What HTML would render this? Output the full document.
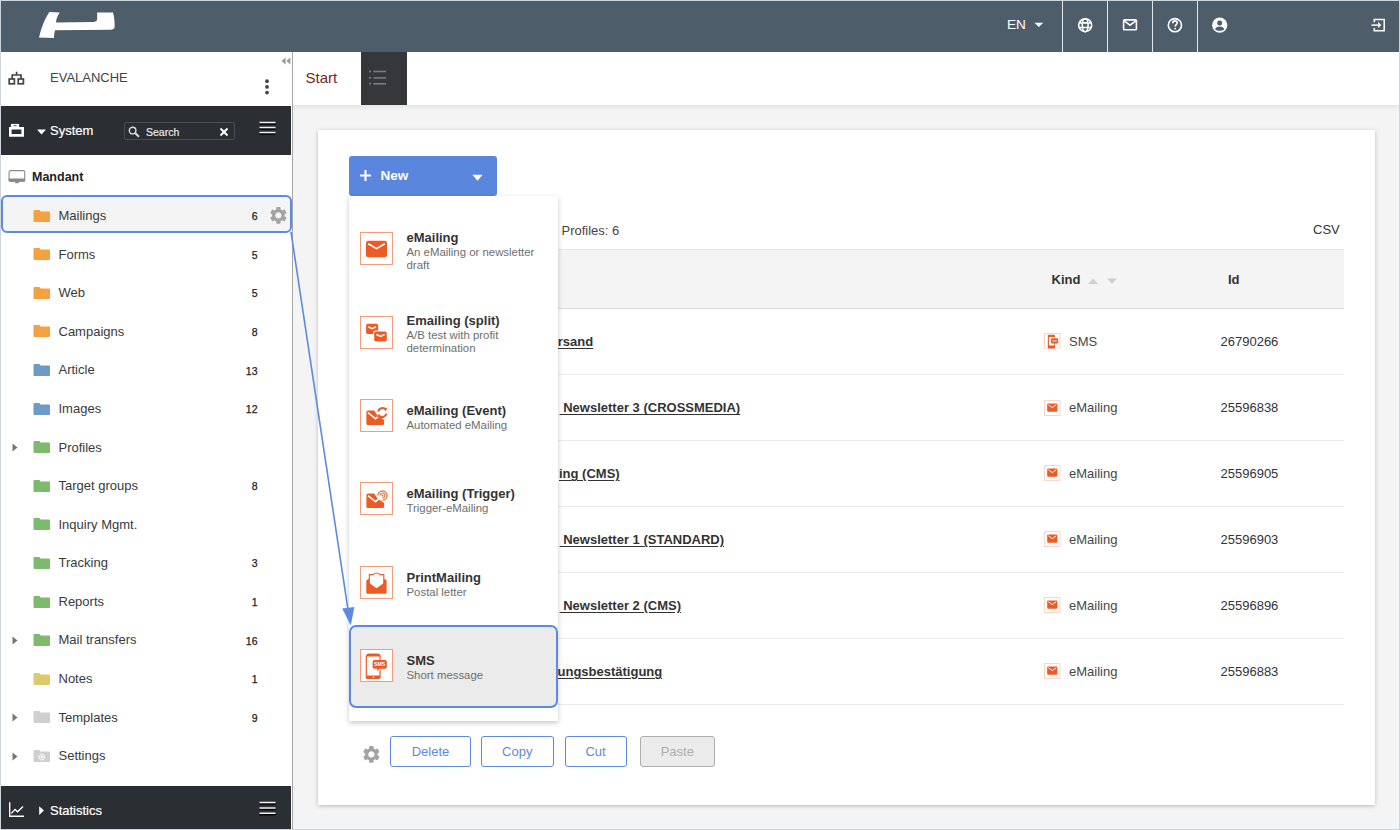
<!DOCTYPE html>
<html><head><meta charset="utf-8">
<style>
*{box-sizing:border-box;margin:0;padding:0}
html,body{width:1400px;height:830px;overflow:hidden;background:#fff;font-family:"Liberation Sans",sans-serif;color:#333}
#frame{position:absolute;left:0;top:0;width:1400px;height:830px;border:1px solid #cdd5dc;z-index:50;pointer-events:none}
.a{position:absolute}
#hdr{left:0;top:0;width:1400px;height:52px;background:#4d5d69}
.hsep{top:0;width:1px;height:52px;background:#e6e9ec}
#side{left:1px;top:52px;width:291px;height:777px;background:#fff}
#sideline{left:292px;top:52px;width:1px;height:777px;background:#a5a5a5}
#sysbar{left:1px;top:105.6px;width:290px;height:49.4px;background:#2b2e33}
#statbar{left:1px;top:786px;width:290px;height:43px;background:#2b2e33}
#tabs{left:293px;top:52px;width:1106px;height:53px;background:#fff}
#content{left:293px;top:105px;width:1106px;height:724px;background:#f4f4f4}
#panel{left:318px;top:130px;width:1057px;height:675px;background:#fff;box-shadow:0 1px 4px rgba(0,0,0,.25)}
.t13{font-size:13px;line-height:15px}
.lnk{font-weight:bold;text-decoration:underline;text-underline-offset:2px;white-space:nowrap;color:#333}
</style></head><body>
<div id="frame"></div>
<div id="hdr" class="a">
<svg class="a" style="left:0;top:0" width="130" height="52" viewBox="0 0 130 52">
<path fill="#fff" d="M49.3 12.1 L59.8 12.6 C57.6 15.5 56.3 18.8 56 22.5 L93.8 21.9 C96.3 21.6 97.3 20.5 97.2 18.6 L97.1 12.5 L113 12.5 C114.4 17.5 114.8 22.5 114.6 27.3 C114.4 29 113 29.6 110.7 29.7 L55.2 30.2 C54.3 32.5 54 35 54 37.9 L39 37.6 C41 28.5 44.5 19.5 49.3 12.1 Z"/>
</svg>
<div class="a" style="left:1007px;top:16.5px;font-size:13.6px;line-height:16px;color:#fff">EN</div>
<svg class="a" style="left:1034px;top:21px" width="11" height="7" viewBox="0 0 11 7"><path fill="#fff" d="M0.5 1.8 L9.2 1.8 L4.85 5.9 Z"/></svg>
<div class="a hsep" style="left:1062px;top:0"></div>
<div class="a hsep" style="left:1107px;top:0"></div>
<div class="a hsep" style="left:1152px;top:0"></div>
<div class="a hsep" style="left:1197px;top:0"></div>
<svg class="a" style="left:1076px;top:16px" width="18" height="18" viewBox="0 0 18 18"><g fill="none" stroke="#fff" stroke-width="1.6"><circle cx="9.2" cy="9.2" r="6.5"/><ellipse cx="9.2" cy="9.2" rx="2.9" ry="6.5"/><path d="M3 6.9H15.4M3 11.5H15.4"/></g></svg>
<svg class="a" style="left:1121px;top:17px" width="18" height="16" viewBox="0 0 18 16"><g fill="none" stroke="#fff" stroke-width="1.6"><rect x="2.6" y="2.9" width="12.8" height="9.9" rx="0.8"/><path d="M2.9 3.6 L9 8.2 L15.1 3.6"/></g></svg>
<svg class="a" style="left:1166px;top:16px" width="18" height="18" viewBox="0 0 18 18"><g fill="none" stroke="#fff" stroke-width="1.6"><circle cx="8.9" cy="9.2" r="6.6"/><path d="M6.7 7.3 C6.7 5.7 7.8 4.9 9 4.9 C10.3 4.9 11.2 5.7 11.2 7 C11.2 8.5 9.1 8.7 9.1 10.4"/></g><circle cx="9.1" cy="12.6" r="0.95" fill="#fff"/></svg>
<svg class="a" style="left:1211px;top:16px" width="18" height="18" viewBox="0 0 18 18"><circle cx="8.7" cy="9.2" r="7.6" fill="#fff"/><circle cx="8.7" cy="6.9" r="2.5" fill="#4d5d69"/><path fill="#4d5d69" d="M4 13.2 C5.1 11.1 6.9 10.5 8.7 10.5 C10.5 10.5 12.3 11.1 13.4 13.2 C12.2 14.2 10.5 14.8 8.7 14.8 C6.9 14.8 5.2 14.2 4 13.2Z"/></svg>
<svg class="a" style="left:1369.5px;top:17px" width="18" height="18" viewBox="0 0 18 18"><g fill="none" stroke="#fff" stroke-width="1.5"><path d="M4.3 5.2 V2.4 H14.2 V13.8 H4.3 V11"/><path d="M1.5 8.1 H9.5"/></g><path fill="#fff" d="M8 4.9 L11.3 8.1 L8 11.3Z"/></svg>
</div>
<div id="side" class="a"></div>
<div id="sideline" class="a"></div>
<div id="sysbar" class="a"></div>
<div id="statbar" class="a"></div>
<div id="tabs" class="a"></div>
<svg class="a" style="left:7px;top:71px" width="20" height="16" viewBox="0 0 20 16"><g fill="none" stroke="#444" stroke-width="1.7"><path d="M9.6 0.8 V4 M5.2 7.8 V4 H14 V7.8"/><rect x="2.2" y="8" width="5.2" height="4.8"/><rect x="11.2" y="8" width="5.2" height="4.8"/></g></svg>
<div class="a t13" style="left:50px;top:70px;color:#444">EVALANCHE</div>
<svg class="a" style="left:281px;top:57px" width="10" height="8" viewBox="0 0 10 8"><path fill="#999" d="M4.6 0.5 V7.5 L0.5 4Z M9.4 0.5 V7.5 L5.3 4Z"/></svg>
<svg class="a" style="left:263.7px;top:78px" width="6" height="18" viewBox="0 0 6 18"><g fill="#444"><circle cx="3" cy="3.2" r="1.9"/><circle cx="3" cy="8.9" r="1.9"/><circle cx="3" cy="14.6" r="1.9"/></g></svg>
<svg class="a" style="left:8px;top:122px" width="18" height="16" viewBox="0 0 18 16"><path fill="#fff" fill-rule="evenodd" d="M1 5.1 H16 V14.8 H1Z M3.6 7.5 V12.1 H13.4 V7.5Z"/><path fill="#fff" d="M2.9 1.9 H11.1 V5.3 H2.9Z"/><rect x="5.6" y="3.4" width="3" height="0.8" fill="#2b2e33"/></svg>
<svg class="a" style="left:36px;top:128px" width="11" height="8" viewBox="0 0 11 8"><path fill="#fff" d="M1 1.6 H10 L5.5 6.5Z"/></svg>
<div class="a t13" style="left:50px;top:123px;color:#fff;-webkit-text-stroke:0.2px #fff">System</div>
<div class="a" style="left:124px;top:122px;width:111px;height:18px;border:1px solid #4b4e54;border-radius:2px"></div>
<svg class="a" style="left:128px;top:126px" width="13" height="12" viewBox="0 0 13 12"><g fill="none" stroke="#ddd" stroke-width="1.4"><circle cx="4.6" cy="4.6" r="3.3"/><path d="M7 7 L11 10.8" stroke-width="2"/></g></svg>
<div class="a" style="left:146px;top:126px;font-size:10.5px;line-height:13px;color:#e8e8e8;-webkit-text-stroke:0.2px #e8e8e8">Search</div>
<svg class="a" style="left:219px;top:127px" width="10" height="10" viewBox="0 0 10 10"><path stroke="#fff" stroke-width="2" d="M1.5 1.5 L8.5 8.5 M8.5 1.5 L1.5 8.5"/></svg>
<svg class="a" style="left:258px;top:120px" width="19" height="16" viewBox="0 0 19 16"><g stroke="#000" stroke-width="1.5"><path d="M1.5 4 H17.5 M1.5 9 H17.5 M1.5 14 H17.5"/></g><g stroke="#f0f0f0" stroke-width="1.5"><path d="M1.5 2.6 H17.5 M1.5 7.6 H17.5 M1.5 12.6 H17.5"/></g></svg>
<svg class="a" style="left:7px;top:168px" width="20" height="17" viewBox="0 0 20 17"><rect x="2.1" y="2.6" width="15.6" height="10.6" rx="1.3" fill="#fff" stroke="#8a8a8a" stroke-width="1.1"/><path d="M1.6 10.6 H18.2 V12.3 Q18.2 13.7 16.8 13.7 H3 Q1.6 13.7 1.6 12.3Z" fill="#8a8a8a"/><rect x="8.2" y="13.7" width="3.6" height="1.5" fill="#8a8a8a"/></svg>
<div class="a" style="left:32px;top:170px;font-size:12.5px;line-height:15px;font-weight:bold;color:#222">Mandant</div>
<div class="a" style="left:1px;top:195.3px;width:291px;height:37.5px;border:2px solid #5b8ae0;border-radius:6px;background:#f4f4f4"></div>

<svg class="a" style="left:267.9px;top:205.1px" width="20.75" height="20.75" viewBox="0 0 24 24"><path fill="#a3a3a3" d="M19.14 12.94c.04-.3.06-.61.06-.94 0-.32-.02-.64-.07-.94l2.03-1.58c.18-.14.23-.41.12-.61l-1.92-3.32c-.12-.22-.37-.29-.59-.22l-2.39.96c-.5-.38-1.03-.7-1.62-.94L14.4 2.81c-.04-.24-.24-.41-.48-.41h-3.84c-.24 0-.43.17-.47.41L9.25 5.35c-.59.24-1.13.57-1.62.94L5.24 5.33c-.22-.08-.47 0-.59.22L2.74 8.87c-.12.21-.08.47.12.61l2.03 1.58c-.05.3-.09.63-.09.94s.02.64.07.94l-2.03 1.58c-.18.14-.23.41-.12.61l1.92 3.32c.12.22.37.29.59.22l2.39-.96c.5.38 1.03.7 1.62.94l.36 2.54c.05.24.24.41.48.41h3.84c.24 0 .44-.17.47-.41l.36-2.54c.59-.24 1.13-.56 1.62-.94l2.39.96c.22.08.47 0 .59-.22l1.92-3.32c.12-.22.07-.47-.12-.61l-2.01-1.58zM12 15.6c-1.98 0-3.6-1.62-3.6-3.6s1.62-3.6 3.6-3.6 3.6 1.62 3.6 3.6-1.62 3.6-3.6 3.6z"/></svg>
<svg class="a" style="left:33px;top:210px" width="17" height="12" viewBox="0 0 17 12"><path fill="#f5a142" d="M0.5 1 Q0.5 0 1.5 0 H6.5 L7.5 1.5 H16 Q17 1.5 17 2.5 V11 Q17 12 16 12 H1.5 Q0.5 12 0.5 11Z"/></svg>
<div class="a t13" style="left:58.5px;top:208.2px;color:#3a3a3a">Mailings</div>
<div class="a" style="left:230px;width:27.5px;text-align:right;top:210.3px;font-size:10.5px;line-height:12px;font-weight:normal;color:#222;-webkit-text-stroke:0.25px #222">6</div>
<svg class="a" style="left:33px;top:248px" width="17" height="12" viewBox="0 0 17 12"><path fill="#f5a142" d="M0.5 1 Q0.5 0 1.5 0 H6.5 L7.5 1.5 H16 Q17 1.5 17 2.5 V11 Q17 12 16 12 H1.5 Q0.5 12 0.5 11Z"/></svg>
<div class="a t13" style="left:58.5px;top:246.8px;color:#3a3a3a">Forms</div>
<div class="a" style="left:230px;width:27.5px;text-align:right;top:248.9px;font-size:10.5px;line-height:12px;font-weight:normal;color:#222;-webkit-text-stroke:0.25px #222">5</div>
<svg class="a" style="left:33px;top:287px" width="17" height="12" viewBox="0 0 17 12"><path fill="#f5a142" d="M0.5 1 Q0.5 0 1.5 0 H6.5 L7.5 1.5 H16 Q17 1.5 17 2.5 V11 Q17 12 16 12 H1.5 Q0.5 12 0.5 11Z"/></svg>
<div class="a t13" style="left:58.5px;top:285.3px;color:#3a3a3a">Web</div>
<div class="a" style="left:230px;width:27.5px;text-align:right;top:287.4px;font-size:10.5px;line-height:12px;font-weight:normal;color:#222;-webkit-text-stroke:0.25px #222">5</div>
<svg class="a" style="left:33px;top:325px" width="17" height="12" viewBox="0 0 17 12"><path fill="#f5a142" d="M0.5 1 Q0.5 0 1.5 0 H6.5 L7.5 1.5 H16 Q17 1.5 17 2.5 V11 Q17 12 16 12 H1.5 Q0.5 12 0.5 11Z"/></svg>
<div class="a t13" style="left:58.5px;top:323.9px;color:#3a3a3a">Campaigns</div>
<div class="a" style="left:230px;width:27.5px;text-align:right;top:326.0px;font-size:10.5px;line-height:12px;font-weight:normal;color:#222;-webkit-text-stroke:0.25px #222">8</div>
<svg class="a" style="left:33px;top:364px" width="17" height="12" viewBox="0 0 17 12"><path fill="#6e9bc6" d="M0.5 1 Q0.5 0 1.5 0 H6.5 L7.5 1.5 H16 Q17 1.5 17 2.5 V11 Q17 12 16 12 H1.5 Q0.5 12 0.5 11Z"/></svg>
<div class="a t13" style="left:58.5px;top:362.4px;color:#3a3a3a">Article</div>
<div class="a" style="left:230px;width:27.5px;text-align:right;top:364.5px;font-size:10.5px;line-height:12px;font-weight:normal;color:#222;-webkit-text-stroke:0.25px #222">13</div>
<svg class="a" style="left:33px;top:403px" width="17" height="12" viewBox="0 0 17 12"><path fill="#6e9bc6" d="M0.5 1 Q0.5 0 1.5 0 H6.5 L7.5 1.5 H16 Q17 1.5 17 2.5 V11 Q17 12 16 12 H1.5 Q0.5 12 0.5 11Z"/></svg>
<div class="a t13" style="left:58.5px;top:401.0px;color:#3a3a3a">Images</div>
<div class="a" style="left:230px;width:27.5px;text-align:right;top:403.1px;font-size:10.5px;line-height:12px;font-weight:normal;color:#222;-webkit-text-stroke:0.25px #222">12</div>
<svg class="a" style="left:33px;top:441px" width="17" height="12" viewBox="0 0 17 12"><path fill="#7dba6e" d="M0.5 1 Q0.5 0 1.5 0 H6.5 L7.5 1.5 H16 Q17 1.5 17 2.5 V11 Q17 12 16 12 H1.5 Q0.5 12 0.5 11Z"/></svg>
<div class="a t13" style="left:58.5px;top:439.6px;color:#3a3a3a">Profiles</div>
<svg class="a" style="left:12px;top:443px" width="6" height="9" viewBox="0 0 6 9"><path fill="#777" d="M0.5 0.5 L5.5 4.5 L0.5 8.5Z"/></svg>
<svg class="a" style="left:33px;top:480px" width="17" height="12" viewBox="0 0 17 12"><path fill="#7dba6e" d="M0.5 1 Q0.5 0 1.5 0 H6.5 L7.5 1.5 H16 Q17 1.5 17 2.5 V11 Q17 12 16 12 H1.5 Q0.5 12 0.5 11Z"/></svg>
<div class="a t13" style="left:58.5px;top:478.1px;color:#3a3a3a">Target groups</div>
<div class="a" style="left:230px;width:27.5px;text-align:right;top:480.2px;font-size:10.5px;line-height:12px;font-weight:normal;color:#222;-webkit-text-stroke:0.25px #222">8</div>
<svg class="a" style="left:33px;top:518px" width="17" height="12" viewBox="0 0 17 12"><path fill="#7dba6e" d="M0.5 1 Q0.5 0 1.5 0 H6.5 L7.5 1.5 H16 Q17 1.5 17 2.5 V11 Q17 12 16 12 H1.5 Q0.5 12 0.5 11Z"/></svg>
<div class="a t13" style="left:58.5px;top:516.7px;color:#3a3a3a">Inquiry Mgmt.</div>
<svg class="a" style="left:33px;top:557px" width="17" height="12" viewBox="0 0 17 12"><path fill="#7dba6e" d="M0.5 1 Q0.5 0 1.5 0 H6.5 L7.5 1.5 H16 Q17 1.5 17 2.5 V11 Q17 12 16 12 H1.5 Q0.5 12 0.5 11Z"/></svg>
<div class="a t13" style="left:58.5px;top:555.2px;color:#3a3a3a">Tracking</div>
<div class="a" style="left:230px;width:27.5px;text-align:right;top:557.3px;font-size:10.5px;line-height:12px;font-weight:normal;color:#222;-webkit-text-stroke:0.25px #222">3</div>
<svg class="a" style="left:33px;top:596px" width="17" height="12" viewBox="0 0 17 12"><path fill="#7dba6e" d="M0.5 1 Q0.5 0 1.5 0 H6.5 L7.5 1.5 H16 Q17 1.5 17 2.5 V11 Q17 12 16 12 H1.5 Q0.5 12 0.5 11Z"/></svg>
<div class="a t13" style="left:58.5px;top:593.8px;color:#3a3a3a">Reports</div>
<div class="a" style="left:230px;width:27.5px;text-align:right;top:595.9px;font-size:10.5px;line-height:12px;font-weight:normal;color:#222;-webkit-text-stroke:0.25px #222">1</div>
<svg class="a" style="left:33px;top:634px" width="17" height="12" viewBox="0 0 17 12"><path fill="#7dba6e" d="M0.5 1 Q0.5 0 1.5 0 H6.5 L7.5 1.5 H16 Q17 1.5 17 2.5 V11 Q17 12 16 12 H1.5 Q0.5 12 0.5 11Z"/></svg>
<div class="a t13" style="left:58.5px;top:632.4px;color:#3a3a3a">Mail transfers</div>
<div class="a" style="left:230px;width:27.5px;text-align:right;top:634.5px;font-size:10.5px;line-height:12px;font-weight:normal;color:#222;-webkit-text-stroke:0.25px #222">16</div>
<svg class="a" style="left:12px;top:636px" width="6" height="9" viewBox="0 0 6 9"><path fill="#777" d="M0.5 0.5 L5.5 4.5 L0.5 8.5Z"/></svg>
<svg class="a" style="left:33px;top:673px" width="17" height="12" viewBox="0 0 17 12"><path fill="#dccb6c" d="M0.5 1 Q0.5 0 1.5 0 H6.5 L7.5 1.5 H16 Q17 1.5 17 2.5 V11 Q17 12 16 12 H1.5 Q0.5 12 0.5 11Z"/></svg>
<div class="a t13" style="left:58.5px;top:670.9px;color:#3a3a3a">Notes</div>
<div class="a" style="left:230px;width:27.5px;text-align:right;top:673.0px;font-size:10.5px;line-height:12px;font-weight:normal;color:#222;-webkit-text-stroke:0.25px #222">1</div>
<svg class="a" style="left:33px;top:711px" width="17" height="12" viewBox="0 0 17 12"><path fill="#cfcfcf" d="M0.5 1 Q0.5 0 1.5 0 H6.5 L7.5 1.5 H16 Q17 1.5 17 2.5 V11 Q17 12 16 12 H1.5 Q0.5 12 0.5 11Z"/></svg>
<div class="a t13" style="left:58.5px;top:709.5px;color:#3a3a3a">Templates</div>
<div class="a" style="left:230px;width:27.5px;text-align:right;top:711.6px;font-size:10.5px;line-height:12px;font-weight:normal;color:#222;-webkit-text-stroke:0.25px #222">9</div>
<svg class="a" style="left:12px;top:713px" width="6" height="9" viewBox="0 0 6 9"><path fill="#777" d="M0.5 0.5 L5.5 4.5 L0.5 8.5Z"/></svg>
<svg class="a" style="left:33px;top:750px" width="17" height="12" viewBox="0 0 17 12"><path fill="#cfcfcf" d="M0.5 1 Q0.5 0 1.5 0 H6.5 L7.5 1.5 H16 Q17 1.5 17 2.5 V11 Q17 12 16 12 H1.5 Q0.5 12 0.5 11Z"/><circle cx="8.8" cy="7.2" r="2.6" fill="none" stroke="#fff" stroke-width="1.6" stroke-dasharray="1.3 0.75"/><circle cx="8.8" cy="7.2" r="1.1" fill="#fff"/></svg>
<div class="a t13" style="left:58.5px;top:748.0px;color:#3a3a3a">Settings</div>
<svg class="a" style="left:12px;top:752px" width="6" height="9" viewBox="0 0 6 9"><path fill="#777" d="M0.5 0.5 L5.5 4.5 L0.5 8.5Z"/></svg>
<svg class="a" style="left:8px;top:801px" width="18" height="18" viewBox="0 0 18 18"><g fill="none" stroke="#fff" stroke-width="1.4"><path d="M1.7 1.2 V15.2 H16"/><path d="M3.4 12.4 L7 8.4 L9.6 10.8 L15 5.4"/></g></svg>
<svg class="a" style="left:39px;top:806px" width="6" height="9" viewBox="0 0 6 9"><path fill="#fff" d="M0.2 0.3 L4.9 4.6 L0.2 8.9Z"/></svg>
<div class="a" style="left:50px;top:803px;font-size:13px;line-height:15px;color:#fff;-webkit-text-stroke:0.2px #fff">Statistics</div>
<svg class="a" style="left:258px;top:800px" width="19" height="16" viewBox="0 0 19 16"><g stroke="#000" stroke-width="1.5"><path d="M1.5 4 H17.5 M1.5 9.5 H17.5 M1.5 14.7 H17.5"/></g><g stroke="#f0f0f0" stroke-width="1.5"><path d="M1.5 2.6 H17.5 M1.5 8.1 H17.5 M1.5 13.3 H17.5"/></g></svg>

<div id="content" class="a"></div>
<div class="a" style="left:293px;top:105px;width:1106px;height:6px;background:linear-gradient(#e6e6e6,#f4f4f4)"></div>
<div class="a" style="left:305.5px;top:68.9px;font-size:15px;line-height:17px;color:#7a2424">Start</div>
<div class="a" style="left:361px;top:52px;width:46px;height:53px;background:#35373b"></div>
<svg class="a" style="left:366px;top:68px" width="22" height="20" viewBox="0 0 22 20"><g fill="#7a7c80"><circle cx="4.1" cy="3.5" r="1.05"/><circle cx="4.1" cy="9.9" r="1.05"/><circle cx="4.1" cy="15.8" r="1.05"/><rect x="7.4" y="2.7" width="12.6" height="1.6"/><rect x="7.4" y="9.1" width="12.6" height="1.6"/><rect x="7.4" y="15" width="12.6" height="1.6"/></g></svg>
<div id="panel" class="a"></div>

<div class="a t13" style="left:561.5px;top:222.5px;color:#444">Profiles: 6</div>
<div class="a t13" style="left:1313px;top:221.5px;color:#333">CSV</div>
<div class="a" style="left:349px;top:249px;width:995px;height:60px;background:#f4f4f4;border-top:1px solid #e6e6e6;border-bottom:1px solid #dcdcdc"></div>
<div class="a t13" style="left:1051.5px;top:272px;font-weight:bold;color:#333">Kind</div>
<svg class="a" style="left:1086px;top:276px" width="34" height="10" viewBox="0 0 34 10"><path fill="#d0d0d0" d="M2 8 L7 2.5 L12 8Z M21 2.5 L31 2.5 L26 8Z"/></svg>
<div class="a t13" style="left:1228px;top:272px;font-weight:bold;color:#333">Id</div>
<div class="a t13 lnk" style="left:557.7px;top:334.4px">rsand </div>
<svg class="a" style="left:1044px;top:332.6px" width="17" height="16" viewBox="0 0 17 16"><rect x="0.5" y="0.5" width="15.5" height="15.5" fill="#fff" stroke="#f8d2c2"/><path fill="none" stroke="#ee5a24" stroke-width="1.1" d="M4.4 3 V14.2 H10.3 V3Z"/><rect x="3.8" y="1.8" width="7.1" height="2.3" rx="1" fill="#ee5a24"/><rect x="3.8" y="12.6" width="7.1" height="2.9" rx="1" fill="#ee5a24"/><path fill="#fff" d="M6.4 4.6 H14.8 V11.8 H6.4Z"/><path fill="#ee5a24" d="M8 5.2 H13.2 Q14.2 5.2 14.2 6.2 V9.6 Q14.2 10.6 13.2 10.6 H11.2 L10 12.2 L9.9 10.6 H8 Q7 10.6 7 9.6 V6.2 Q7 5.2 8 5.2Z"/><rect x="8.3" y="7.4" width="4.6" height="1.1" fill="#fbd6c6"/></svg>
<div class="a t13" style="left:1069px;top:334.4px;color:#474747">SMS</div>
<div class="a t13" style="left:1220.5px;top:334.4px;color:#333">26790266</div>
<div class="a" style="left:349px;top:374.4px;width:995px;height:1px;background:#ebebeb"></div>
<div class="a t13 lnk" style="left:559.6px;top:400.3px"> Newsletter 3 (CROSSMEDIA)</div>
<svg class="a" style="left:1044px;top:399.5px" width="17" height="16" viewBox="0 0 17 16"><rect x="0.5" y="0.5" width="15.5" height="15" fill="#fff" stroke="#fad6c8"/><rect x="3.2" y="3.6" width="10.2" height="8.2" rx="1" fill="#ee5a24"/><path d="M4.4 4.8 L8.3 7.6 L12.2 4.8" fill="none" stroke="#fff" stroke-width="1"/></svg>
<div class="a t13" style="left:1069px;top:400.3px;color:#474747">eMailing</div>
<div class="a t13" style="left:1220.5px;top:400.3px;color:#333">25596838</div>
<div class="a" style="left:349px;top:440.3px;width:995px;height:1px;background:#ebebeb"></div>
<div class="a t13 lnk" style="left:559.0px;top:466.2px">ing (CMS)</div>
<svg class="a" style="left:1044px;top:465.4px" width="17" height="16" viewBox="0 0 17 16"><rect x="0.5" y="0.5" width="15.5" height="15" fill="#fff" stroke="#fad6c8"/><rect x="3.2" y="3.6" width="10.2" height="8.2" rx="1" fill="#ee5a24"/><path d="M4.4 4.8 L8.3 7.6 L12.2 4.8" fill="none" stroke="#fff" stroke-width="1"/></svg>
<div class="a t13" style="left:1069px;top:466.2px;color:#474747">eMailing</div>
<div class="a t13" style="left:1220.5px;top:466.2px;color:#333">25596905</div>
<div class="a" style="left:349px;top:506.1px;width:995px;height:1px;background:#ebebeb"></div>
<div class="a t13 lnk" style="left:559.6px;top:532.0px"> Newsletter 1 (STANDARD)</div>
<svg class="a" style="left:1044px;top:531.2px" width="17" height="16" viewBox="0 0 17 16"><rect x="0.5" y="0.5" width="15.5" height="15" fill="#fff" stroke="#fad6c8"/><rect x="3.2" y="3.6" width="10.2" height="8.2" rx="1" fill="#ee5a24"/><path d="M4.4 4.8 L8.3 7.6 L12.2 4.8" fill="none" stroke="#fff" stroke-width="1"/></svg>
<div class="a t13" style="left:1069px;top:532.0px;color:#474747">eMailing</div>
<div class="a t13" style="left:1220.5px;top:532.0px;color:#333">25596903</div>
<div class="a" style="left:349px;top:572.0px;width:995px;height:1px;background:#ebebeb"></div>
<div class="a t13 lnk" style="left:559.6px;top:597.9px"> Newsletter 2 (CMS)</div>
<svg class="a" style="left:1044px;top:597.1px" width="17" height="16" viewBox="0 0 17 16"><rect x="0.5" y="0.5" width="15.5" height="15" fill="#fff" stroke="#fad6c8"/><rect x="3.2" y="3.6" width="10.2" height="8.2" rx="1" fill="#ee5a24"/><path d="M4.4 4.8 L8.3 7.6 L12.2 4.8" fill="none" stroke="#fff" stroke-width="1"/></svg>
<div class="a t13" style="left:1069px;top:597.9px;color:#474747">eMailing</div>
<div class="a t13" style="left:1220.5px;top:597.9px;color:#333">25596896</div>
<div class="a" style="left:349px;top:637.9px;width:995px;height:1px;background:#ebebeb"></div>
<div class="a t13 lnk" style="left:557.5px;top:663.8px">ungsbestätigung</div>
<svg class="a" style="left:1044px;top:663.0px" width="17" height="16" viewBox="0 0 17 16"><rect x="0.5" y="0.5" width="15.5" height="15" fill="#fff" stroke="#fad6c8"/><rect x="3.2" y="3.6" width="10.2" height="8.2" rx="1" fill="#ee5a24"/><path d="M4.4 4.8 L8.3 7.6 L12.2 4.8" fill="none" stroke="#fff" stroke-width="1"/></svg>
<div class="a t13" style="left:1069px;top:663.8px;color:#474747">eMailing</div>
<div class="a t13" style="left:1220.5px;top:663.8px;color:#333">25596883</div>
<div class="a" style="left:349px;top:704px;width:995px;height:1px;background:#ebebeb"></div>
<svg class="a" style="left:360.7px;top:744.1px" width="20.75" height="20.75" viewBox="0 0 24 24"><path fill="#a3a3a3" d="M19.14 12.94c.04-.3.06-.61.06-.94 0-.32-.02-.64-.07-.94l2.03-1.58c.18-.14.23-.41.12-.61l-1.92-3.32c-.12-.22-.37-.29-.59-.22l-2.39.96c-.5-.38-1.03-.7-1.62-.94L14.4 2.81c-.04-.24-.24-.41-.48-.41h-3.84c-.24 0-.43.17-.47.41L9.25 5.35c-.59.24-1.13.57-1.62.94L5.24 5.33c-.22-.08-.47 0-.59.22L2.74 8.87c-.12.21-.08.47.12.61l2.03 1.58c-.05.3-.09.63-.09.94s.02.64.07.94l-2.03 1.58c-.18.14-.23.41-.12.61l1.92 3.32c.12.22.37.29.59.22l2.39-.96c.5.38 1.03.7 1.62.94l.36 2.54c.05.24.24.41.48.41h3.84c.24 0 .44-.17.47-.41l.36-2.54c.59-.24 1.13-.56 1.62-.94l2.39.96c.22.08.47 0 .59-.22l1.92-3.32c.12-.22.07-.47-.12-.61l-2.01-1.58zM12 15.6c-1.98 0-3.6-1.62-3.6-3.6s1.62-3.6 3.6-3.6 3.6 1.62 3.6 3.6-1.62 3.6-3.6 3.6z"/></svg>
<div class="a t13" style="left:390px;top:736px;width:81px;height:31px;border-radius:3px;border:1px solid #5b8ae0;background:#fff;color:#5b8ae0;text-align:center;line-height:29px">Delete</div>
<div class="a t13" style="left:481px;top:736px;width:72.5px;height:31px;border-radius:3px;border:1px solid #5b8ae0;background:#fff;color:#5b8ae0;text-align:center;line-height:29px">Copy</div>
<div class="a t13" style="left:564.5px;top:736px;width:62px;height:31px;border-radius:3px;border:1px solid #5b8ae0;background:#fff;color:#5b8ae0;text-align:center;line-height:29px">Cut</div>
<div class="a t13" style="left:639.5px;top:736px;width:75.5px;height:31px;border-radius:3px;border:1px solid #adadad;background:#ebebeb;color:#adadad;text-align:center;line-height:29px">Paste</div>
<div class="a" style="left:349px;top:156px;width:148px;height:40px;background:#5a86de;border-radius:3px"></div>
<svg class="a" style="left:359px;top:169px" width="13" height="13" viewBox="0 0 13 13"><path stroke="#fff" stroke-width="2.1" d="M6.5 1 V12 M1 6.5 H12"/></svg>
<div class="a" style="left:380.5px;top:167.5px;font-size:13.5px;line-height:16px;font-weight:bold;color:#fff">New</div>
<svg class="a" style="left:471px;top:173px" width="13" height="9" viewBox="0 0 13 9"><path fill="#fff" d="M1.4 1.8 H11.6 L6.5 7.8Z"/></svg>

<div class="a" style="left:349px;top:196px;width:209px;height:525px;background:#fff;box-shadow:0 2px 5px rgba(0,0,0,.22)"></div>
<div class="a" style="left:349px;top:625px;width:209px;height:83px;border:2px solid #5b8ae0;border-radius:7px;background:#ebebeb"></div>
<svg class="a" style="left:360px;top:232px" width="33" height="33" viewBox="0 0 33 33"><rect x="0.5" y="0.5" width="32" height="32" fill="#fff" stroke="#f49b7a" stroke-width="1"/><rect x="6" y="8.8" width="21" height="16.4" rx="2.5" fill="#ee5a24"/><path d="M8.2 11.8 L16.5 16.672 L24.8 11.8" fill="none" stroke="#fff" stroke-width="1.6"/></svg>
<div class="a t13" style="left:406.5px;top:229.8px;font-weight:bold;color:#333">eMailing</div>
<div class="a" style="left:406.5px;top:245.7px;font-size:11.4px;line-height:13px;color:#6e6e6e;white-space:nowrap">An eMailing or newsletter</div>
<div class="a" style="left:406.5px;top:258.8px;font-size:11.4px;line-height:13px;color:#6e6e6e;white-space:nowrap">draft</div>
<svg class="a" style="left:360px;top:316px" width="33" height="33" viewBox="0 0 33 33"><rect x="0.5" y="0.5" width="32" height="32" fill="#fff" stroke="#f49b7a" stroke-width="1"/><rect x="6.1" y="7.8" width="12.1" height="10.2" rx="1.8" fill="#ee5a24"/><path d="M8.3 10.8 L12.149999999999999 12.696 L16.0 10.8" fill="none" stroke="#fff" stroke-width="1.6"/><rect x="13.2" y="14.4" width="14.6" height="12.2" rx="2" fill="#fff"/><rect x="14.2" y="15.4" width="12.6" height="10.2" rx="1.8" fill="#ee5a24"/><path d="M16.4 18.4 L20.5 20.296 L24.599999999999998 18.4" fill="none" stroke="#fff" stroke-width="1.6"/></svg>
<div class="a t13" style="left:406.5px;top:313.2px;font-weight:bold;color:#333">Emailing (split)</div>
<div class="a" style="left:406.5px;top:329.1px;font-size:11.4px;line-height:13px;color:#6e6e6e;white-space:nowrap">A/B test with profit</div>
<div class="a" style="left:406.5px;top:342.2px;font-size:11.4px;line-height:13px;color:#6e6e6e;white-space:nowrap">determination</div>
<svg class="a" style="left:360px;top:399px" width="33" height="33" viewBox="0 0 33 33"><rect x="0.5" y="0.5" width="32" height="32" fill="#fff" stroke="#f49b7a" stroke-width="1"/><path fill="#ee5a24" d="M6.4 13 Q6.4 11.4 8 11.4 H14.2 L17.5 16.5 L24.1 21 V24.5 Q24.1 26.1 22.5 26.1 H8 Q6.4 26.1 6.4 24.5Z"/><path d="M7.9 13.7 L15.6 19.7 L18.6 17.2" fill="none" stroke="#fff" stroke-width="1.5"/><path d="M18.2 12.6 A4.4 4.4 0 0 1 25.6 10.3" fill="none" stroke="#ee5a24" stroke-width="2.1"/><path d="M26.4 14.6 A4.4 4.4 0 0 1 19 16.8" fill="none" stroke="#ee5a24" stroke-width="2.1"/><path fill="#ee5a24" d="M23.6 8.6 L27.3 9.2 L25.3 12.6Z M20.6 18.6 L17 17.8 L19.1 14.5Z"/></svg>
<div class="a t13" style="left:406.5px;top:402.8px;font-weight:bold;color:#333">eMailing (Event)</div>
<div class="a" style="left:406.5px;top:418.7px;font-size:11.4px;line-height:13px;color:#6e6e6e;white-space:nowrap">Automated eMailing</div>
<svg class="a" style="left:360px;top:482px" width="33" height="33" viewBox="0 0 33 33"><rect x="0.5" y="0.5" width="32" height="32" fill="#fff" stroke="#f49b7a" stroke-width="1"/><path fill="#ee5a24" d="M6.4 13 Q6.4 11.4 8 11.4 H14.2 L17.5 16.5 L24.1 21 V24.5 Q24.1 26.1 22.5 26.1 H8 Q6.4 26.1 6.4 24.5Z"/><path d="M7.9 13.7 L15.6 19.7 L18.6 17.2" fill="none" stroke="#fff" stroke-width="1.5"/><g fill="none" stroke="#ee5a24"><path d="M17.8 13.6 A4.6 4.6 0 1 1 22.6 18.2" stroke-width="1.4" stroke-opacity=".8"/><path d="M20 13.6 A2.4 2.4 0 1 1 22.4 16" stroke-width="1.3" stroke-opacity=".75"/></g><circle cx="22.4" cy="13.6" r="0.9" fill="#ee5a24"/></svg>
<div class="a t13" style="left:406.5px;top:486.2px;font-weight:bold;color:#333">eMailing (Trigger)</div>
<div class="a" style="left:406.5px;top:502.1px;font-size:11.4px;line-height:13px;color:#6e6e6e;white-space:nowrap">Trigger-eMailing</div>
<svg class="a" style="left:360px;top:566px" width="33" height="33" viewBox="0 0 33 33"><rect x="0.5" y="0.5" width="32" height="32" fill="#fff" stroke="#f49b7a" stroke-width="1"/><path fill="#ee5a24" d="M6.3 14.5 L10.5 11.5 V18 L16.5 22.5 L22.5 18 V11.5 L26.6 14.5 V26.4 Q26.6 27.7 25.3 27.7 H7.6 Q6.3 27.7 6.3 26.4Z"/><path d="M9.3 8.6 H13 Q16.5 5.4 20 8.6 H23.8 V17.8 L16.5 23 L9.3 17.8Z" fill="#fff" stroke="#ee5a24" stroke-width="1.1"/></svg>
<div class="a t13" style="left:406.5px;top:569.6px;font-weight:bold;color:#333">PrintMailing</div>
<div class="a" style="left:406.5px;top:585.5px;font-size:11.4px;line-height:13px;color:#6e6e6e;white-space:nowrap">Postal letter</div>
<svg class="a" style="left:360px;top:649px" width="33" height="33" viewBox="0 0 33 33"><rect x="0.5" y="0.5" width="32" height="32" fill="#fff" stroke="#f49b7a" stroke-width="1"/><path fill="none" stroke="#ee5a24" stroke-width="1.2" d="M7.5 6 H18.6 Q20.1 6 20.1 7.5 V11"/><path fill="none" stroke="#ee5a24" stroke-width="1.2" d="M20.1 21 V27.8 Q20.1 29.3 18.6 29.3 H7.5 Q6.3 29.3 6.3 28 V7.3 Q6.3 6 7.5 6"/><path fill="#ee5a24" d="M6.3 7.5 Q6.3 4.6 9 4.6 H17.6 Q20.3 4.6 20.5 7.5 V7.5 H6.3Z"/><path fill="#ee5a24" d="M6.3 26.5 H20.3 V27.5 Q20.3 30 17.6 30 H9 Q6.3 30 6.3 27.5Z"/><rect x="12.8" y="27.5" width="1.4" height="1.2" fill="#fff"/><path fill="#ee5a24" d="M14.3 10.9 H25 Q26.8 10.9 26.8 12.7 V17.9 Q26.8 19.7 25 19.7 H19.6 L17.2 22.6 L17.4 19.7 H14.3 Q12.6 19.7 12.6 17.9 V12.7 Q12.6 10.9 14.3 10.9Z"/><text x="19.7" y="17.2" font-size="5.2" font-weight="bold" fill="#fff" text-anchor="middle" font-family="Liberation Sans">SMS</text></svg>
<div class="a t13" style="left:406.5px;top:653.0px;font-weight:bold;color:#333">SMS</div>
<div class="a" style="left:406.5px;top:668.9px;font-size:11.4px;line-height:13px;color:#6e6e6e;white-space:nowrap">Short message</div>
<svg class="a" style="left:0;top:0;z-index:20" width="400" height="640" viewBox="0 0 400 640"><path d="M291 232 L348.2 611" stroke="#5b8ae0" stroke-width="1.6" fill="none"/><path fill="#5b8ae0" d="M342.2 608.6 L354.3 607 L350.8 625.5Z"/></svg>
</body></html>
